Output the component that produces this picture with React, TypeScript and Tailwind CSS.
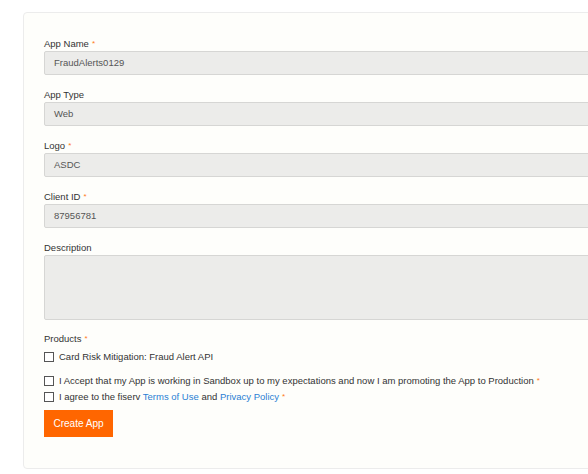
import React from 'react'

const font = { fontFamily: '"Liberation Sans", Arial, sans-serif' }

function Req() {
  return <span className="text-[#ff7a1a] text-[8px] align-top ml-[3px]">*</span>
}

function Field({ label, value, required }: { label: string; value: string; required?: boolean }) {
  return (
    <div className="flex flex-col">
      <label className="text-[9.5px] leading-[11px] text-[#333] mb-[2px]">
        {label}
        {required && <Req />}
      </label>
      <div className="h-[24px] border border-[#d6d6d4] bg-[#ececea] rounded-[2px] px-[9px] flex items-center text-[9.5px] text-[#555]">
        {value}
      </div>
    </div>
  )
}

function Check({ children }: { children: React.ReactNode }) {
  return (
    <label className="flex items-center gap-[5px] text-[9.5px] leading-[11px] text-[#333]">
      <span className="w-[10px] h-[10px] border border-[#555] bg-white shrink-0" />
      <span>{children}</span>
    </label>
  )
}

export default function App() {
  return (
    <div className="w-[588px] h-[474px] bg-white overflow-hidden pt-[12px] pl-[23px]" style={font}>
      <div className="w-[600px] h-[457px] bg-[#fefefb] border border-[#ececec] rounded-[4px] pl-[20px] pr-[20px] pt-[25px]">
        <div className="flex flex-col gap-[14px]">
          <Field label="App Name" value="FraudAlerts0129" required />
          <Field label="App Type" value="Web" />
          <Field label="Logo" value="ASDC" required />
          <Field label="Client ID" value="87956781" required />
          <div className="flex flex-col">
            <label className="text-[9.5px] leading-[11px] text-[#333] mb-[2px]">Description</label>
            <div className="h-[65px] border border-[#d6d6d4] bg-[#ececea] rounded-[2px]" />
          </div>
        </div>
        <div className="mt-[13px] text-[9.5px] leading-[11px] text-[#333]">
          Products
          <Req />
        </div>
        <div className="mt-[7px]">
          <Check>Card Risk Mitigation: Fraud Alert API</Check>
        </div>
        <div className="mt-[13px] flex flex-col gap-[5px]">
          <Check>
            I Accept that my App is working in Sandbox up to my expectations and now I am promoting the App to Production
            <Req />
          </Check>
          <Check>
            I agree to the fiserv <span className="text-[#2a7fd4]">Terms of Use</span> and{' '}
            <span className="text-[#2a7fd4]">Privacy Policy</span>
            <Req />
          </Check>
        </div>
        <button className="mt-[8px] h-[27px] w-[69px] bg-[#ff6600] text-white text-[10px]">Create App</button>
      </div>
    </div>
  )
}
